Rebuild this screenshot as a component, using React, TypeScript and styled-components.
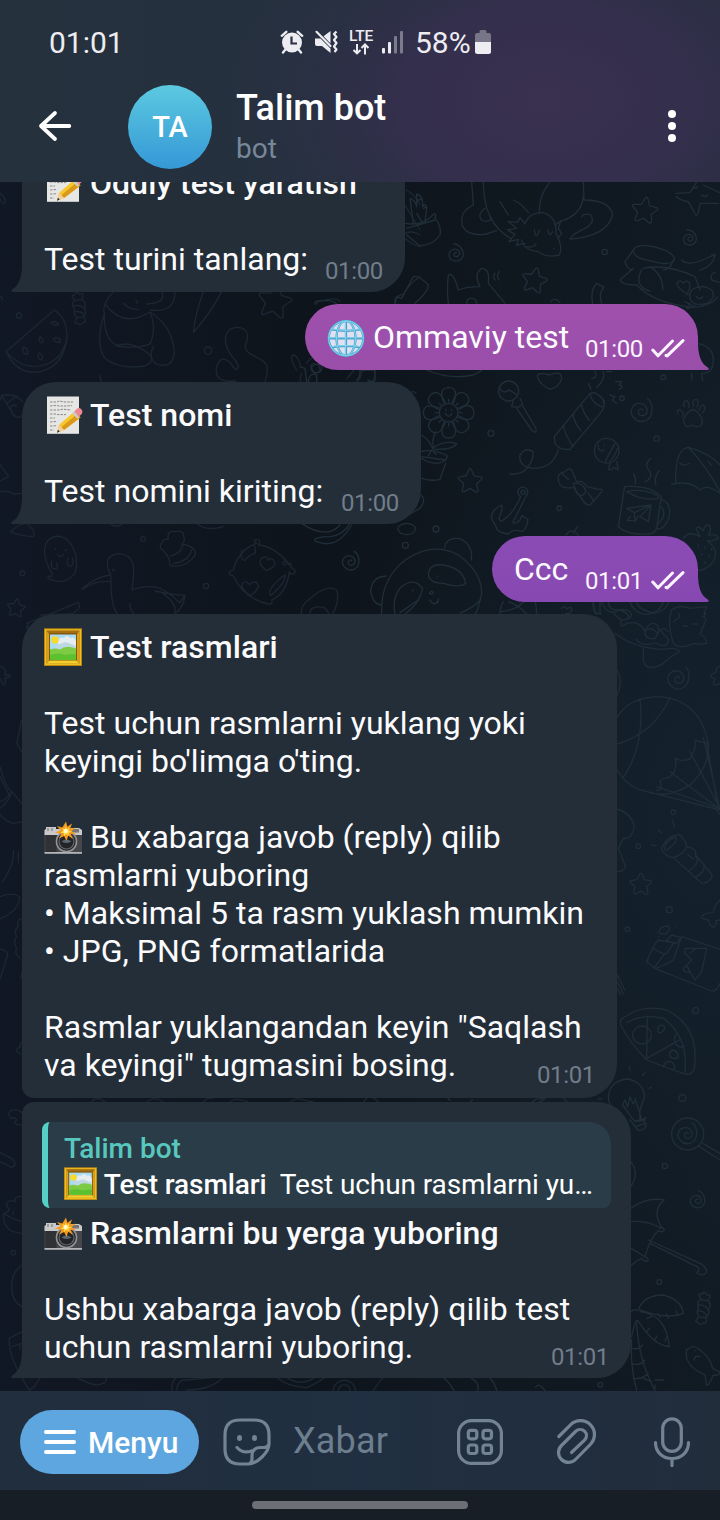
import React from "react";
import styled, { createGlobalStyle, css } from "styled-components";

const GlobalStyle = createGlobalStyle`
  *, *::before, *::after { box-sizing: border-box; }
  body {
    margin: 0;
    background: #0e151d;
    font-family: Roboto, "Noto Sans", sans-serif;
    color: #fff;
  }
`;

const Screen = styled.div`
  width: 720px;
  height: 1520px;
  display: flex;
  flex-direction: column;
  overflow: hidden;
`;

/* ---------- header ---------- */

const Header = styled.header`
  height: 182px;
  flex: none;
  position: relative;
  z-index: 1;
  background: radial-gradient(ellipse 330px 220px at 545px 100px, #3a3050 0%, #332f4c 45%, rgba(43, 48, 68, 0.55) 75%, rgba(37, 49, 63, 0) 100%), linear-gradient(90deg, #25313d 0%, #25303f 60%, #282c40 100%);
`;

const StatusBar = styled.div`
  height: 84px;
  display: flex;
  align-items: center;
  padding: 1px 0 0 49px;
  color: #ededf1;
  font-size: 30px;
  line-height: 36px;
`;

const Clock = styled.span`
  width: 231px;
`;

const StatusIcons = styled.div`
  display: flex;
  align-items: center;
  svg { display: block; margin-bottom: 1px; }
`;

const MuteIcon = styled.svg`
  margin-left: 10px;
`;

const Network = styled.span`
  display: flex;
  flex-direction: column;
  align-items: center;
  width: 24px;
  margin: 0 9px 0 11px;
  font-size: 15.5px;
  font-weight: 500;
  line-height: 13px;
  letter-spacing: -0.3px;
`;

const BatteryLevel = styled.span`
  margin: 0 4px 0 11px;
`;

const TitleBar = styled.div`
  height: 86px;
  display: flex;
  align-items: center;
  padding: 0 44px 0 38px;
`;

const IconButton = styled.button<{ $ml?: number }>`
  display: block;
  padding: 0;
  border: 0;
  background: none;
  color: inherit;
  margin-left: ${(p) => p.$ml ?? 0}px;
  svg { display: block; }
`;

const Avatar = styled.div`
  width: 84px;
  height: 84px;
  margin-left: 56px;
  border-radius: 50%;
  display: flex;
  align-items: center;
  justify-content: center;
  background: linear-gradient(#5cc9e0, #3598d6);
  font-size: 29px;
  font-weight: 500;
`;

const Heading = styled.div`
  flex: 1;
  margin-left: 24px;
  display: flex;
  flex-direction: column;
  gap: 3px;
  padding-bottom: 3px;
`;

const ChatName = styled.h1`
  margin: 0;
  font-size: 36px;
  font-weight: 500;
  line-height: 42px;
`;

const ChatStatus = styled.span`
  font-size: 28px;
  line-height: 33px;
  color: #778899;
`;

/* ---------- conversation ---------- */

const Conversation = styled.main`
  flex: 1;
  min-height: 0;
  position: relative;
  display: flex;
  flex-direction: column;
  justify-content: flex-end;
  padding: 0 22px 13px;
  overflow: hidden;
  background: radial-gradient(ellipse 380px 560px at 720px 620px, #14212d 0%, rgba(20, 33, 45, 0) 100%), linear-gradient(90deg, #111825 0%, #0e141b 45%, #111b24 100%);
`;

const Wallpaper = styled.svg`
  position: absolute;
  inset: 0;
  width: 720px;
  height: 1209px;
  fill: none;
  stroke-linecap: round;
  stroke-linejoin: round;
`;

type Side = "in" | "out";

const Bubble = styled.article<{ $side: Side; $w: number; $gap?: number; $fill?: string; $join?: "top" | "bottom" }>`
  position: relative;
  flex: none;
  width: ${(p) => p.$w}px;
  margin-top: ${(p) => p.$gap ?? 12}px;
  padding: 14px 22px ${(p) => (p.$join === "top" ? 12 : 14)}px;
  background: ${(p) => p.$fill ?? "#232e39"};
  ${(p) =>
    p.$side === "in"
      ? css`
          align-self: flex-start;
          border-radius: ${p.$join === "top" ? 12 : 34}px 34px 34px ${p.$join === "bottom" ? 12 : 0}px;
        `
      : css`
          align-self: flex-end;
          border-radius: 33px 33px 0 33px;
        `}
`;

const TailShape = styled.svg<{ $side: Side }>`
  position: absolute;
  bottom: 0;
  ${(p) => (p.$side === "in" ? "left: -11px;" : "right: -11px; transform: scaleX(-1);")}
`;

const Text = styled.p`
  margin: 0;
  font-size: 32px;
  line-height: 38px;
  letter-spacing: 0.02px;
  white-space: pre;
  color: #fbfbfd;
`;

const LastLine = styled.div`
  height: 38px;
  display: flex;
  justify-content: space-between;
`;

const Strong = styled.strong`
  font-weight: 500;
`;

const Emoji = styled.svg`
  vertical-align: top;
  overflow: visible;
`;

const Meta = styled.div<{ $side: Side; $lift?: number }>`
  display: flex;
  align-items: center;
  gap: 8px;
  height: 28px;
  margin: ${(p) => 17 - (p.$lift ?? 0)}px ${(p) => (p.$side === "out" ? "-9px" : "0")} 0 0;
  font-size: 24px;
  line-height: 28px;
  letter-spacing: -0.35px;
  color: ${(p) => (p.$side === "out" ? "#fbf4ff" : "#717d89")};
`;

const Reply = styled.div`
  width: 569px;
  height: 86px;
  margin: 6px 0 6px -2px;
  padding: 9px 16px 0;
  border-left: 6px solid #54d0c6;
  border-radius: 8px 22px 8px 8px;
  background: #2a3c47;
  font-size: 28px;
  line-height: 36px;
`;

const ReplyName = styled.div`
  color: #58c8bf;
  font-weight: 500;
`;

const ReplyText = styled.div`
  letter-spacing: -0.1px;
  white-space: pre;
`;

/* ---------- composer ---------- */

const Composer = styled.footer`
  flex: none;
  height: 99px;
  display: flex;
  align-items: center;
  padding: 3px 29px 0 20px;
  color: #738393;
  background: linear-gradient(90deg, #212e3d 0%, #202f41 50%, #222d3c 100%);
`;

const MenuButton = styled.button`
  width: 179px;
  height: 64px;
  border: 0;
  border-radius: 32px;
  padding: 2px 0 0 24px;
  display: flex;
  align-items: center;
  gap: 12px;
  background: #5ea6df;
  color: #fff;
  font: 500 30px/36px Roboto, sans-serif;
  svg { margin-bottom: 2px; }
`;

const Placeholder = styled.span`
  flex: 1;
  margin-left: 22px;
  font-size: 36px;
  line-height: 42px;
  letter-spacing: 0.2px;
  padding-bottom: 2px;
  color: #6d7e8e;
`;

const NavBar = styled.div`
  flex: none;
  height: 30px;
  display: flex;
  align-items: center;
  justify-content: center;
  background: #171e26;
`;

const HomeIndicator = styled.div`
  width: 216px;
  height: 8px;
  border-radius: 4px;
  background: #6c6f76;
`;

/* ---------- drawings ---------- */

const Memo = () => (
  <Emoji width="38" height="38" viewBox="0 0 38 38">
    <rect x="3" y="0.5" width="32" height="37.3" fill="#e6e6e4" />
    <path d="M6 6h7l2-1 6 1h8M6 10l6-.6 3 .6h7l6-.4M6 14h8l5-.8 8 .8M6 18h5l3 .6h8M6 22h5M6 26l7-.6M6 30h4l3-.5M6 34h4" stroke="#8a8a8a" strokeWidth="1" strokeDasharray="2.5 1" fill="none" />
    <path d="M13 36.500l2-7.5L31 15l5.500 6.500L20 34z" fill="#f8c62c" />
    <path d="M17 31.500L33.800 17.500l2.700 4L20 34z" fill="#dc9818" />
    <path d="M30 15.800l2.500-2.500q2.500-2.500 5 .3 2 2.600-.3 5l-2.200 2z" fill="#ef8793" />
    <path d="M28.400 17.200l2-1.800 4.800 5.800-2 1.600z" fill="#c8ccd0" />
    <path d="M13 36.700l2.200-7.700 4.900 5z" fill="#f0cf9a" />
    <path d="M13 36.700l.9-3 2 1.900z" fill="#333" />
  </Emoji>
);

const Globe = () => (
  <Emoji width="38" height="38" viewBox="0 0 38 38">
    <circle cx="19" cy="20.300" r="18" fill="#dfe1f3" />
    <g fill="none" stroke="#4a9fc8" strokeWidth="2.200">
      <circle cx="19" cy="20.300" r="17.300" />
      <ellipse cx="19" cy="20.300" rx="9.500" ry="17.300" />
      <path d="M19 3v34.500M2 20.300h34M5 11.500q14 2.800 28 0M5 29.300q14-2.800 28 0" />
    </g>
    <g fill="none" stroke="#7fd3ee" strokeWidth="1.100">
      <path d="M18.500 3v34.500M2 19.800h34M5 11q14 2.800 28 0M5 28.800q14-2.800 28 0" />
      <circle cx="19" cy="20.300" r="17.300" />
      <ellipse cx="19" cy="20.300" rx="9.500" ry="17.300" />
    </g>
  </Emoji>
);

const Frame = ({ size = 38 }: { size?: number }) => (
  <Emoji width={size} height={size} viewBox="0 0 38 38">
    <rect x="0" y="0.300" width="38" height="37.700" fill="#b8860f" />
    <rect x="1" y="1.300" width="36" height="35.700" fill="#eebd22" />
    <rect x="2.500" y="2.500" width="33" height="33" fill="#a36d14" />
    <path d="M2.500 35.500l3.500-3.500h26l3.500 3.500z" fill="#f4d02e" />
    <path d="M2.500 35.500V3L5 6v27zM35.500 35.500V3L33 6v27z" fill="#d9a01c" />
    <rect x="5" y="5" width="28" height="27.500" fill="#85590c" />
    <rect x="6" y="6.500" width="26" height="25.500" fill="#a6dcf4" />
    <path d="M14 13q2-5 6-3 3-4 6 0 4-2 6 3v9l-9 2-9-5z" fill="#e5edf2" />
    <path d="M12 17l10-3 10 4v5H10z" fill="#bdd8e2" />
    <circle cx="11" cy="12" r="3.700" fill="#f9d92c" />
    <path d="M6 21.500q5-2 10 0 6-5 16-1V32H6z" fill="#7ccb43" />
    <path d="M6 27q9-3 15 0 6-1 11-1v6H6z" fill="#5cc02f" />
  </Emoji>
);

const Camera = () => (
  <Emoji width="38" height="38" viewBox="0 0 38 38">
    <rect x=".5" y="14" width="37.500" height="21" fill="#46474a" />
    <rect x="1.500" y="17" width="11" height="17" fill="#303134" />
    <path d="M.5 17V12l1.500-1V9h10v2h13l2-1h8l3 2v5z" fill="#c9c9c9" />
    <rect x="28" y="11" width="7" height="3.500" fill="#777" />
    <path d="M4 10v3M8 10v3" stroke="#8d8d8d" strokeWidth="1.500" />
    <rect x=".5" y="34" width="37.500" height="1.800" fill="#b4b4b6" />
    <circle cx="22.500" cy="23.500" r="10.800" fill="#929498" />
    <circle cx="22.500" cy="23.500" r="9.300" fill="#232428" />
    <circle cx="22.500" cy="23.500" r="7.500" fill="none" stroke="#66686e" strokeWidth="1.200" />
    <path d="M17.500 23.500q5-4 10 0-5 3-10 0" fill="#59636f" />
    <path d="M22 3.500l1.400 5.300L28 5.500l-1.800 5 5.500-.8-4.300 3.500 4.800 2.300-5.500.7 2.300 4.800-4.800-3.200L22.500 23l-2.400-5-5 2.600 2.300-4.800-6.400-1.200 5.500-2.300-3.500-4.300 5.300 1.500z" fill="#f59a1d" />
    <path d="M21.800 7.500l1 3.500 2.700-1.500-1 2.800 3 1.200-3 1.500.5 2.500-2.800-1.500-2.300 2.200v-3l-3.300-.7 2.800-1.700-1.400-2.500 3 .6z" fill="#ffdc4d" />
    <circle cx="21.700" cy="13" r="2" fill="#fffbd8" />
  </Emoji>
);

const Tail = ({ side, color }: { side: Side; color: string }) => (
  <TailShape $side={side} width="12" height="28" viewBox="0 0 12 28">
    <path d="M12 0H11C11 13 8 22 1.200 25.400Q0 26.200.3 26.800 .5 28 2 28h10z" fill={color} />
  </TailShape>
);

const Checks = () => (
  <svg width="34" height="20" viewBox="0 0 34 20" fill="none" stroke="currentColor" strokeWidth="3" strokeLinecap="round" strokeLinejoin="round">
    <path d="M1.800 11l5.200 5.800L21.500 2M15 16.300l1.200.6L32 1.600" />
  </svg>
);

const Dot = ({ x, y, r = 7 }: { x: number; y: number; r?: number }) => <circle cx={x} cy={y} r={r} />;

const Star = ({ x, y, s = 1, a = 0 }: { x: number; y: number; s?: number; a?: number }) => (
  <path
    transform={`translate(${x} ${y}) rotate(${a}) scale(${s})`}
    strokeWidth={4 / s}
    d="M-3-32Q0-37 4-32L12-13 31-11Q37-9 33-4L19 9 23 28Q22 35 16 32L0 22-17 32Q-23 33-22 27L-18 8-33-5Q-36-10-30-11L-11-14Z"
  />
);

const Spiral = ({ x, y, s = 1, a = 0 }: { x: number; y: number; s?: number; a?: number }) => (
  <path
    transform={`translate(${x} ${y}) rotate(${a}) scale(${s})`}
    strokeWidth={4 / s}
    d="M24-32C40-12 30 28 2 32C-26 34-42 2-26-16C-10-32 18-20 15 2C12 20-14 18-12 2C-10-8 2-8 3 0"
  />
);

const Candy = ({ x, y, a = 0 }: { x: number; y: number; a?: number }) => (
  <g transform={`translate(${x} ${y}) rotate(${a})`}>
    <path d="M-10-26Q-25-18-15 0Q-20 18-9 26L10 26Q22 14 16 0Q24-16 10-26ZM-10-26Q-26-44-10-42Q-4-56 4-43Q22-46 10-26M-9 26Q-25 44-9 43Q-2 54 5 43Q22 44 10 26M-16-10Q8-12 15 2M-15 8Q4 6 12 19" />
  </g>
);

/* Each group is drawn on a grid three times finer than the screen. */
const area = (x: number, y: number) => `translate(${x} ${y}) scale(0.33333)`;

const Doodles = () => (
  <Wallpaper viewBox="0 182 720 1209">
    <g strokeWidth="4" stroke="#1c2733">
      <g transform={area(0, 170)}>
        <path d="M18 545L163 420Q202 445 201 502Q192 585 125 604Q55 620 18 545ZM20 548Q78 610 146 580Q192 560 201 500" />
        <path d="M152 459q14-9 24 3q-9 9-24-3zM120 500q14 9 7 18q-14-1-7-18zM160 506q18-8 22 10q-18 4-22-10zM70 531q18 6 12 22q-17-1-12-22zM118 548q14 11 8 22q-19-3-8-22z" />
        <Candy x={238} y={416} a={-6} />
        <Dot x={57} y={437} r={8} />
        <Dot x={624} y={542} r={11} />
        <path d="M340 365Q305 405 313 430Q284 520 315 565Q355 600 435 588Q470 570 444 550Q390 510 353 527Q310 510 313 430M318 405Q370 475 450 426Q520 470 523 550Q515 600 465 580Q445 560 460 530M450 426Q470 470 452 520Q420 538 350 528M525 365Q525 430 452 420M485 365Q500 400 440 402M370 400Q390 420 415 418M408 390l4 10" />
        <path d="M610 365Q586 430 580 487Q628 435 665 365" />
        <Star x={824} y={392} s={1.45} a={10} />
        <path d="M708 633Q640 640 650 590Q660 560 680 570C700 578 695 598 710 598C725 590 700 565 690 550C660 500 685 472 712 472C750 474 745 505 736 525C730 560 800 560 802 595Q802 615 795 636" />
        <path d="M890 600Q870 570 876 556Q890 550 902 586M905 610Q895 640 905 636M940 580q18 2 20 20q-13 20-26 0q-6-14 6-20M920 580Q940 550 960 570M1070 636q14-10 14-30l40-20v40q-8 14-22 6M1040 626q20-20 30-40" />
        <path d="M945 403Q940 390 970 392Q1010 380 1020 395M1185 400Q1180 380 1210 372Q1230 340 1260 320M1220 60Q1250 80 1260 105M1215 105L1260 180M1215 190Q1240 180 1260 195M1215 205Q1235 225 1260 230" />
        <path d="M0 70Q20 85 15 98Q5 105 0 85M0 380Q12 380 5 390" />
        <path d="M0 692Q3 685 5 676Q45 668 68 695M5 676L33 722Q50 755 67 735M33 722Q30 700 50 708M20 700l30-22" />
        <path d="M0 884L26 920L0 933M0 965Q24 960 40 972L66 970" />
        <path d="M300 615Q300 630 306 636" />
        <path d="M32 1085Q55 1062 80 1060Q110 1085 100 1100Q60 1098 32 1085M330 1060Q345 1075 365 1064M590 1060Q615 1085 670 1070" />
      </g>

      <g transform={area(0, 520)}>
        <path d="M150 150Q120 90 145 60Q175 35 208 65Q240 110 225 160Q190 200 145 175Q140 165 155 170Q160 160 150 150M155 123Q150 150 170 145Q175 140 170 128M205 115Q195 135 212 140Q225 130 217 115M172 103q10 13 18 0M165 85l3 4M196 88l2 4" />
        <path d="M245 207Q290 168 332 165Q305 110 350 102Q410 98 400 175L396 210Q450 190 490 210Q510 220 538 248Q550 238 552 226Q518 224 465 213M332 165L333 185Q285 180 250 207M333 185Q333 260 352 280M390 250Q388 265 402 282M480 215Q530 245 525 280Q550 265 555 226M338 150q3-8 4 3" />
        <path d="M490 92Q472 80 488 65Q490 55 505 58Q500 30 525 35Q550 30 550 45Q558 65 545 72Q590 80 586 105Q560 145 510 137Q510 110 490 92M512 108Q545 100 548 74M520 130Q565 125 575 90" />
        <path d="M770 70Q755 60 770 58Q785 60 775 75Q830 80 877 145Q890 150 883 160Q870 165 868 155Q860 220 815 240Q820 255 805 252Q730 235 700 167Q680 165 692 153L700 150Q715 90 770 70M725 90Q720 120 735 122Q745 105 765 100Q770 80 760 75M800 152Q770 130 785 115Q800 105 805 120Q820 110 825 130Q825 142 800 152M750 227Q720 205 727 190Q740 180 748 194Q770 175 775 200Q770 215 750 227M812 227Q800 205 855 165Q860 185 812 227M850 135q18-8 25-3M848 130l10-10" />
        <Star x={48} y={263} s={0.78} a={8} />
        <Dot x={67} y={160} />
        <Dot x={429} y={57} />
        <Dot x={618} y={198} r={8} />
        <path d="M905 282Q900 260 925 240Q980 190 1010 210Q1020 240 998 282M930 282Q930 255 970 262Q985 270 985 282M80 310L235 247Q248 265 215 282L120 285M85 310l-5 15 20-8" />
        <path d="M0 440Q20 440 15 465L32 465Q28 475 15 473Q20 495 10 495L0 475" />
        <path d="M65 600Q55 650 50 670L65 695M0 740Q15 800 35 815L65 850M0 770L28 825M35 815Q30 840 0 865M0 885Q20 905 40 910L66 905M0 845Q12 845 35 815M40 992Q45 1030 8 1085M55 995V1028" />
      </g>
      <g transform={area(0, 600)}>
        <path d="M0 890Q40 875 58 890Q60 930 0 957M66 955Q48 960 55 980Q40 990 50 1010Q38 1025 50 1045Q42 1060 60 1075M0 1048Q30 1050 20 1075L0 1138M66 1325Q55 1335 62 1340Q35 1355 66 1362M66 1115l-3 20" />
      </g>
      <g transform={area(0, 1080)}>
        <path d="M66 100Q55 85 32 92Q20 105 35 115Q45 110 50 120Q35 135 66 135M0 218L35 235Q55 255 35 262L0 245M66 350Q45 345 45 365Q18 355 20 380Q38 390 12 400Q5 430 30 450Q50 460 66 460M12 400Q30 415 66 425M40 395v8" />
        <Dot x={40} y={518} />
        <path d="M66 555Q35 575 35 620Q35 665 66 680M66 755L28 775Q22 830 88 930Q105 925 120 892M35 800L66 790M60 790v20" />
        <path d="M230 892Q260 910 290 915Q325 910 318 892M515 932Q515 900 530 892M530 930Q535 895 560 900M560 900L640 892M560 930Q620 930 655 905L670 892M830 892Q860 920 920 923Q960 905 975 892M860 892Q900 920 940 895" />
        <path d="M1000 932a32 30 0 0 1 66 0M1015 932a18 18 0 0 1 36 0M1120 932Q1135 908 1150 892M275 66Q290 45 315 66M440 66Q465 46 490 66M610 66Q620 52 640 55M690 66Q705 50 745 66M870 66l20-10 50 10M1090 66q18-30 45 0" />
      </g>
    </g>

    <g strokeWidth="4" stroke="#202e39">
      <g transform={area(300, 180)}>
        <path d="M515 6L520 75Q475 95 488 140Q505 170 560 162Q580 155 590 152M555 85Q530 105 545 120Q565 130 575 115M550 6Q550 130 632 175M600 65L625 105M640 60Q665 70 685 98M850 6L852 60Q930 60 938 105Q920 170 810 177Q820 160 855 145Q890 125 870 103Q848 100 845 110M718 98Q715 50 750 6M850 50Q845 105 780 125" />
        <path d="M675 130Q690 95 730 98Q770 110 768 160Q790 200 778 225Q740 235 715 215Q670 210 665 180M675 132L660 113L652 127L625 125L650 145L622 150L645 163L627 185L655 178L650 195L675 190M765 135L782 123L775 145L785 160L773 175M703 150Q708 185 718 150M743 150Q750 175 757 155M675 200Q700 205 708 192M762 205v2" />
        <path d="M340 130L330 55Q345 60 350 80L350 42Q370 45 368 80Q375 65 380 85L375 125M350 100L365 125M370 85l10-5M355 60l12-3M315 130Q370 140 400 103Q410 95 405 120L320 145M410 120Q425 145 420 165Q400 195 360 198L320 165" />
        <Star x={1034} y={90} s={1.12} a={8} />
        <path d="M1128 40L1170 38L1190 6M1128 50Q1150 65 1165 65L1187 105Q1195 110 1200 70L1255 70M1260 38L1210 15M1180 20q8 8 12 0M1205 45q10 8 18 0" />
        <Spiral x={1169} y={174} s={0.65} a={-55} />
        <Spiral x={468} y={220} s={0.72} a={-50} />
        <Dot x={914} y={216} r={8} />
        <Star x={703} y={300} s={1.08} a={12} />
        <path d="M1000 210Q1010 190 1060 200Q1125 215 1123 240Q1110 260 1050 242Q1000 235 1000 210ZM1120 240Q1110 270 1090 270M1000 210L975 245Q980 265 995 270M1000 265L960 300Q965 315 1010 315Q1060 370 1180 382Q1240 375 1252 350M1030 265Q1100 250 1185 290L1200 330M1025 268Q1000 320 1050 333M1050 260Q1090 285 1088 328M1145 240Q1170 265 1245 222Q1240 260 1200 270" />
        <path d="M1170 345Q1135 330 1130 310Q1140 295 1150 310Q1165 295 1170 315Q1170 330 1160 345M1175 330Q1205 310 1235 330Q1250 355 1220 370Q1185 380 1172 360Q1165 345 1175 330M1190 350q8 12 18 0M1155 365l20 10M1165 385l20-10M1245 278Q1230 280 1235 300L1260 308M1160 385l10 -15" />
        <path d="M285 370L290 350L305 355L340 290Q355 285 385 315Q385 335 345 370M445 370Q440 330 445 285Q460 275 475 330Q500 320 540 320Q520 280 545 265Q570 265 565 310L615 370M500 370Q500 355 515 355Q530 355 530 370M585 280q-8 10 0 20M597 275q-8 15 0 25M50 372Q45 362 75 362Q100 360 110 372M752 365Q765 350 780 368M878 370Q870 330 890 310L912 322Q895 340 905 370" />
        <path d="M1193 490Q1240 500 1240 540Q1240 580 1205 580L1208 602M1175 580v20M712 590Q710 575 750 585Q785 570 785 595Q780 620 750 628Q720 615 712 590M910 575q8 20-20 48M885 575q10 20-10 20M865 610l8 18M935 575l-15 0" />
        <path d="M380 570Q450 600 520 585L545 572M0 560l15 5 5 40M25 605q5-30 25-20v20M170 600q12-8 10-30h45v30q-10 10-20 0M35 560q18-15 30 0q0 18-15 18T35 560" />
        <g transform="translate(446 698)">
          <circle r="28" />
          {[0, 45, 90, 135, 180, 225, 270, 315].map((d) => (
            <path key={d} transform={`rotate(${d})`} d="M-14-28Q-33-74 0-76Q32-74 14-28M0-40V-32" />
          ))}
          <path d="M-10 2q10 18 20 0M-8-10v3M8-10v3" />
        </g>
        <path d="M363 765Q385 775 398 805Q430 780 470 790Q460 810 400 808M400 800Q395 780 407 755M363 815Q390 805 440 825Q445 845 410 850Q385 850 365 835M437 850L420 898Q395 905 365 895M365 830l70 10M385 828l10-18 14 14" />
        <circle cx="626" cy="633" r="30" />
        <path d="M598 622Q610 645 625 630Q640 635 650 645M640 660L635 680L655 682L668 672L660 655M650 685L695 750Q710 765 708 745L668 678" />
        <Dot x={573} y={760} r={9} />
        <path d="M763 770L870 640Q890 632 910 660Q915 680 905 695L810 808Q780 812 765 790ZM870 640Q875 670 905 680Q915 685 912 660M843 672q6 25 25 50M818 702q6 30 25 50M790 735q6 35 30 65M775 808Q760 865 700 865Q655 860 660 825Q675 800 700 815Q700 850 670 875Q645 885 630 882" />
        <Star x={510} y={902} s={1.05} />
        <Dot x={778} y={985} />
        <Dot x={966} y={655} />
        <Dot x={1090} y={592} />
        <Dot x={1070} y={776} r={8} />
        <path d="M947 605l18 0-8 10q20 5 0 13M930 645l15 5-8 10 12 10" />
        <Spiral x={1026} y={692} s={1} a={-12} />
        <path d="M1150 720Q1165 685 1185 690Q1215 715 1205 735Q1190 745 1175 735Q1155 750 1150 720M1133 700q-3-12 8-10q15 12 5 20M1153 680q-8-18 8-18q10 10 5 20M1180 678q-5-20 10-20q10 12 0 22M1198 690q5-20 15-12q5 10-5 20" />
        <circle cx="920" cy="812" r="37" />
        <path d="M895 805Q905 820 912 808M895 800v-5M912 795v3M945 790L915 845M952 805Q945 830 930 842M930 848L926 868Q935 875 940 862L955 870L950 845" />
        <path d="M830 905L815 870Q805 862 795 875Q770 880 775 900Q780 930 820 922L845 955Q855 975 870 975L905 935Q910 925 895 928L860 920Q850 900 830 905ZM820 910Q850 905 858 935Q845 955 830 940ZM785 880l20 18M880 960l-15-20" />
        <path d="M662 950A15 15 0 1 1 678 948L645 1015Q638 1022 640 1030Q650 1030 660 1020L665 1007L684 1018Q680 1050 665 1055Q640 1045 625 1062Q590 1058 588 1040L575 1015Q573 990 605 975Q610 985 597 1015Q600 1030 612 1018Q640 1000 662 950" />
        <circle cx="669" cy="937" r="6" />
        <path d="M973 925L955 1040Q980 1065 1045 1062Q1065 1060 1070 1045L1084 950Q1050 915 973 920ZM980 935Q1020 925 1060 940Q1080 950 1075 955Q1030 965 980 935M1082 958Q1115 965 1108 1010Q1090 1055 1070 1045M1080 980Q1095 985 1090 1010Q1080 1030 1073 1030M980 985L1053 975L1045 1025L1020 1010L1053 975M980 985L1003 998L1005 1025L1015 1008M1003 998L1053 975M990 1010l-8 12h18M1005 912Q1010 895 1000 882M1035 905Q1065 890 1043 865Q1035 850 1052 835M1068 915Q1060 895 1078 872" />
        <path d="M1260 855Q1230 820 1165 802Q1125 805 1127 910L1115 913Q1170 900 1200 930Q1220 910 1260 940M1165 802Q1220 860 1260 935M1140 850q12 12 28 0M1225 845l10 12" />
        <path d="M1150 1075Q1165 1050 1200 1070L1188 1045Q1195 1035 1210 1052Q1215 1030 1230 1038Q1235 1055 1225 1065Q1250 1060 1255 1075Q1240 1085 1222 1082Q1260 1110 1240 1145Q1220 1170 1193 1172" />
        <path d="M1195 1095v5M1215 1100v5M1205 1120v5M1227 1125v5M1215 1145v5M1235 1105v5" />
        <ellipse cx="320" cy="1047" rx="26" ry="17" />
        <Dot x={408} y={1047} r={9} />
        <Dot x={316} y={1096} r={9} />
        <Spiral x={153} y={1144} s={0.8} a={-20} />
        <path d="M245 1302Q240 1195 320 1137Q400 1085 475 1125Q545 1175 545 1240Q535 1290 525 1302M433 1103Q440 1070 480 1076Q520 1095 514 1140M258 1188Q215 1190 212 1235Q220 1275 245 1275M285 1302Q275 1250 305 1220Q340 1190 368 1225Q360 1270 315 1302M385 1180Q390 1150 430 1155Q490 1165 497 1210Q480 1225 430 1210Q385 1210 385 1180M388 1240q8-12 12-2q-5 8-12 2M390 1262q15 20 26 -5M338 1230v3M412 1188v3" />
        <path d="M45 1085Q40 1070 90 1070Q130 1065 150 1030M50 1085Q110 1110 155 1035M5 1030Q80 1080 120 1035M363 945Q380 960 360 985L330 1002" />
        <path d="M600 1302Q600 1280 610 1265M710 1302Q710 1280 705 1265M600 1295Q650 1290 670 1266M625 1265Q655 1275 680 1302M785 1285q12-10 15 2q14-10 16 2q-5 13-18 12M880 1270Q885 1310 890 1300M905 1265Q920 1310 960 1290Q990 1300 985 1315M1010 1266Q1015 1290 1065 1300Q1100 1290 1105 1268M798 1065Q815 1040 835 1065M820 1060l12-20" />
        <path d="M330 640q10-10 18 0" />
      </g>
      <g transform={area(400, 600)}>
        <path d="M580 5Q575 40 603 42M600 6V38M625 5Q625 30 655 30Q690 25 695 45Q690 60 663 60L640 40M663 60Q660 90 680 70Q720 60 735 95M690 5Q700 40 740 43Q780 40 790 5M645 100Q700 145 790 148Q830 140 838 155Q810 170 790 190Q740 220 730 180L730 145" />
        <path d="M820 130Q800 70 815 30Q840 12 870 25L920 20Q905 50 918 60L900 102Q920 110 920 130Q890 135 880 130Q840 150 820 130M820 65l20-15M840 50l-5-10M850 78h12M878 72l15 0M908 50l10-10M735 90q20-30 35-15t-5 40q-30 5-30-20q15-20 38 5M710 118Q720 140 760 130M765 128Q805 150 805 118L780 90Q790 80 805 95" />
        <Spiral x={836} y={235} s={1} a={-6} />
        <path d="M960 198Q945 205 950 215L932 225Q935 235 945 235L940 252Q945 260 960 250M652 210Q670 245 652 285" />
        <path d="M652 350Q690 290 780 290Q900 300 925 430Q930 500 870 555Q800 600 730 572Q680 560 652 510M720 297Q735 440 668 535M810 293Q760 400 652 432M730 572L960 630L910 412M770 560L960 625L870 455M810 515L955 625L920 430M925 425Q905 430 885 420Q890 450 868 478Q840 485 825 475Q835 510 808 532Q785 535 780 545Q790 570 770 572M945 625l15 18" />
        <path d="M652 627Q695 640 703 680Q695 720 670 715L655 745L677 800Q670 815 652 815M775 690l10 8M817 660l7 22M753 735l15 2" />
        <Dot x={820} y={637} />
        <Dot x={715} y={739} />
        <path d="M785 748Q795 710 838 703Q860 725 860 740Q850 765 818 773Q795 770 785 748ZM795 750Q790 725 825 712Q840 720 800 750M862 742Q875 740 887 755L887 770M887 765L937 825Q930 850 905 850L822 775M890 770Q900 790 868 812M912 798Q915 815 887 832M862 762l18 15" />
        <Star x={722} y={852} s={0.95} />
        <Dot x={808} y={929} r={9} />
        <Dot x={682} y={988} />
        <path d="M960 900Q940 920 940 938Q900 940 906 955L925 960Q930 980 942 982Q950 975 948 962L960 960M778 1000Q775 978 805 978Q815 990 795 1003ZM768 997h1M825 982h1M775 1010h1" />
        <path d="M775 1020Q760 1035 740 1085L765 1105L935 1173Q950 1175 960 1150M775 1020L830 1030L845 1010L960 1048M765 1105Q785 1100 820 1080L845 1010M760 1045Q790 1065 800 1060L820 1030L800 1020L815 1005L840 1012M795 1060L765 1100M855 1045H920L905 1115L885 1140L870 1115Q850 1120 850 1105L875 1080L855 1060ZM870 1060l15-12M860 1100q12 8 5 18" />
        <path d="M652 1125l22 45M652 1145l18 38M652 1165l10 20M0 38L55 0M90 0Q100 20 115 5M180 40Q225 20 240 0" />
      </g>
      <g transform={area(400, 980)}>
        <path d="M662 120Q720 70 800 90Q900 140 883 265Q875 290 850 280Q790 260 740 240Q690 190 662 135ZM680 128Q730 100 790 115Q865 170 855 275M742 108L740 235L842 178M698 165a28 27 0 1 1 56 0a28 27 0 1 1-56 0M780 160Q770 155 775 140Q785 130 795 142Q795 150 780 160M810 230Q805 215 820 210Q835 215 835 232Q820 240 810 230M832 160Q815 175 830 195Q840 205 855 198M790 260Q800 235 820 250Q828 265 820 268" />
        <Dot x={887} y={92} r={9} />
        <Dot x={847} y={354} r={10} />
        <path d="M652 395Q625 380 625 350Q630 300 685 297Q735 310 733 355Q715 390 720 415L738 430Q740 450 715 452L690 420M668 375L675 360L683 380L690 350L700 372L707 360M668 375L702 422Q735 420 738 412M725 418L705 355M705 425L735 420M710 438L738 430M690 270l-2-10M727 287l7-8M747 325l7-4M595 357h10" />
        <circle cx="863" cy="462" r="48" />
        <Spiral x={863} y={462} s={0.9} a={-15} />
        <path d="M908 490L960 520M898 500L960 540" />
        <Dot x={795} y={558} r={8} />
        <Spiral x={893} y={660} s={0.72} a={-35} />
        <path d="M692 545Q720 580 692 620M693 685Q740 650 793 660Q755 690 783 740L793 748Q790 760 775 752Q750 775 735 830Q745 835 745 840Q735 850 725 835Q710 840 695 855M693 725Q740 720 783 745M693 805Q710 815 735 830M745 780L900 850Q925 865 918 880Q905 890 890 878M750 790L895 862Q900 870 890 878" />
        <Dot x={778} y={906} />
        <path d="M715 990Q730 945 790 945Q845 960 850 1000Q800 1020 720 990M720 995Q800 1005 808 1100Q760 1095 720 1030L710 1020Q700 1040 695 1070M710 1030Q715 1140 765 1232M695 1080Q690 1160 710 1230M698 1105Q715 1110 728 1095M695 1150Q720 1160 735 1140M700 1195Q725 1200 745 1180M755 1205l-25-10M765 1200L790 1200M765 1215L765 1225M740 1015l15-5M775 1000l5 12M800 1002l5 12M828 992l5 15M740 1055l8-10M765 1080l5-12M795 1085l5-15" />
        <Candy x={910} y={986} a={8} />
        <path d="M860 1110Q880 1090 900 1110Q930 1130 938 1165L958 1175Q960 1190 940 1185Q925 1220 920 1215L915 1185Q850 1155 860 1110M882 1140Q885 1125 900 1130M885 1112h2M693 995q10-10 18-3" />
        <Dot x={601} y={1214} />
        <path d="M407 1222Q415 1205 435 1232M133 1195Q150 1210 162 1232M215 1195Q240 1210 233 1232M270 1195Q285 1210 290 1232M397 366Q405 355 435 355M418 366l15-8M490 354l12 12M143 354l8 8M210 366l8-8" />
      </g>
    </g>
  </Wallpaper>
);

export default function App() {
  return (
    <>
      <GlobalStyle />
      <Screen>
        <Header>
          <StatusBar>
            <Clock>01:01</Clock>
            <StatusIcons>
              <svg width="24" height="24" viewBox="0 0 24 24">
                <circle cx="12" cy="12.500" r="10" fill="currentColor" />
                <path d="M1.800 5.800l4.500-4M22.200 5.800l-4.500-4M5 20l-2 2.500M19 20l2 2.500" stroke="currentColor" strokeWidth="2.400" strokeLinecap="round" />
                <path d="M11.500 6.500v7h5.500" stroke="#2a3142" strokeWidth="2.200" fill="none" />
              </svg>
              <MuteIcon width="24" height="24" viewBox="0 0 24 24">
                <path d="M1 8.500h5.500L16.500 18.500V23l-8.500-7H3Q1 16 1 14zM9.500 6.300L16.500 1v12.500z" fill="currentColor" />
                <path d="M2.500 1.800L16.500 16" stroke="currentColor" strokeWidth="2.200" strokeLinecap="round" />
                <path d="M22.500 1.500l-2.500 2.500 2.500 3-2.500 3 2.500 3-2.500 3.500 2.500 3-2 2.500" fill="none" stroke="currentColor" strokeWidth="2.200" strokeLinejoin="round" />
              </MuteIcon>
              <Network>
                LTE
                <svg width="18" height="12" viewBox="0 0 18 12" fill="none" stroke="currentColor" strokeWidth="2">
                  <path d="M5 1v9M1.500 7L5 10.300 8.500 7M13 11.500V2M9.500 5L13 1.500 16.500 5" />
                </svg>
              </Network>
              <svg width="22" height="24" viewBox="0 0 22 24" fill="currentColor">
                <rect x="0" y="18" width="3" height="5.500" rx="1" />
                <rect x="6" y="12" width="3" height="11.500" rx="1" />
                <rect x="12" y="6" width="3" height="17.500" rx="1" opacity=".4" />
                <rect x="18" y="1" width="3" height="22.500" rx="1" opacity=".4" />
              </svg>
              <BatteryLevel>58%</BatteryLevel>
              <svg width="16" height="24" viewBox="0 0 16 24">
                <path d="M0 12V5q0-2 2-2h2.500V1.500q0-1.500 1.500-1.500h4q1.500 0 1.500 1.500V3H14q2 0 2 2v7z" fill="#777588" />
                <path d="M0 12h16v9.500q0 2.500-2.500 2.500h-11Q0 24 0 21.500z" fill="#eeedf2" />
              </svg>
            </StatusIcons>
          </StatusBar>
          <TitleBar>
            <IconButton aria-label="Back">
              <svg width="34" height="34" viewBox="0 0 34 34" fill="none" stroke="currentColor" strokeWidth="3.800" strokeLinecap="round" strokeLinejoin="round">
                <path d="M17 3L3 16l14 13M4 16h27.300" />
              </svg>
            </IconButton>
            <Avatar>TA</Avatar>
            <Heading>
              <ChatName>Talim bot</ChatName>
              <ChatStatus>bot</ChatStatus>
            </Heading>
            <IconButton aria-label="More">
              <svg width="8" height="34" viewBox="0 0 8 34" fill="currentColor">
                <circle cx="4" cy="4" r="4" />
                <circle cx="4" cy="16" r="4" />
                <circle cx="4" cy="28" r="4" />
              </svg>
            </IconButton>
          </TitleBar>
        </Header>

        <Conversation>
          <Doodles />
          <Bubble $side="in" $w={383}>
            <Text>
              <Memo /> <Strong>Oddiy test yaratish</Strong>
              {"\n\n"}
            </Text>
            <LastLine>
              <Text>Test turini tanlang:</Text>
              <Meta $side="in">01:00</Meta>
            </LastLine>
            <Tail side="in" color="#232e39" />
          </Bubble>
          <Bubble $side="out" $w={393} $fill="linear-gradient(#9f50ad, #994eaa)">
            <LastLine>
              <Text>
                <Globe /> Ommaviy test
              </Text>
              <Meta $side="out">
                01:00 <Checks />
              </Meta>
            </LastLine>
            <Tail side="out" color="#994eaa" />
          </Bubble>
          <Bubble $side="in" $w={399}>
            <Text>
              <Memo /> <Strong>Test nomi</Strong>
              {"\n\n"}
            </Text>
            <LastLine>
              <Text>Test nomini kiriting:</Text>
              <Meta $side="in">01:00</Meta>
            </LastLine>
            <Tail side="in" color="#232e39" />
          </Bubble>
          <Bubble $side="out" $w={206} $fill="linear-gradient(#8b4bb4, #8749b1)">
            <LastLine>
              <Text>Ccc</Text>
              <Meta $side="out">
                01:01 <Checks />
              </Meta>
            </LastLine>
            <Tail side="out" color="#8749b1" />
          </Bubble>
          <Bubble $side="in" $w={595} $join="bottom">
            <Text>
              <Frame /> <Strong>Test rasmlari</Strong>
              {"\n\nTest uchun rasmlarni yuklang yoki\nkeyingi bo'limga o'ting.\n\n"}
              <Camera />
              {' Bu xabarga javob (reply) qilib\nrasmlarni yuboring\n• Maksimal 5 ta rasm yuklash mumkin\n• JPG, PNG formatlarida\n\nRasmlar yuklangandan keyin "Saqlash'}
            </Text>
            <LastLine>
              <Text>va keyingi" tugmasini bosing.</Text>
              <Meta $side="in" $lift={2}>01:01</Meta>
            </LastLine>
          </Bubble>
          <Bubble $side="in" $w={609} $gap={4} $join="top">
            <Reply>
              <ReplyName>Talim bot</ReplyName>
              <ReplyText>
                <Frame size={33} /> <Strong>Test rasmlari</Strong>
                {"  Test uchun rasmlarni yu…"}
              </ReplyText>
            </Reply>
            <Text>
              <Camera /> <Strong>Rasmlarni bu yerga yuboring</Strong>
              {"\n\nUshbu xabarga javob (reply) qilib test"}
            </Text>
            <LastLine>
              <Text>uchun rasmlarni yuboring.</Text>
              <Meta $side="in" $lift={2}>01:01</Meta>
            </LastLine>
            <Tail side="in" color="#232e39" />
          </Bubble>
        </Conversation>

        <Composer>
          <MenuButton>
            <svg width="32" height="24" viewBox="0 0 32 24" stroke="currentColor" strokeWidth="4" strokeLinecap="round">
              <path d="M2 2h28M2 12h28M2 22h28" />
            </svg>
            Menyu
          </MenuButton>
          <IconButton $ml={24} aria-label="Stickers">
            <svg width="48" height="48" viewBox="0 0 48 48" fill="none" stroke="currentColor" strokeWidth="3.200" strokeLinecap="round" strokeLinejoin="round">
              <path d="M46 26V17Q46 2 31 2H17Q2 2 2 17V31Q2 46 17 46H25Q32 46 39 39T46 26Q45 29.500 41 29.500H37Q29 30 29 38V41Q29 45 26 46" />
              <path d="M14 29.500Q20 36 28.500 33" />
              <ellipse cx="16.500" cy="20" rx="1.500" ry="2" fill="currentColor" strokeWidth="2" />
              <ellipse cx="31.500" cy="20" rx="1.500" ry="2" fill="currentColor" strokeWidth="2" />
            </svg>
          </IconButton>
          <Placeholder>Xabar</Placeholder>
          <IconButton aria-label="Commands">
            <svg width="46" height="46" viewBox="0 0 46 46" fill="none" stroke="currentColor" strokeWidth="3.200">
              <rect x="1.600" y="1.600" width="42.800" height="42.800" rx="13" />
              <rect x="11.300" y="11.300" width="8.500" height="8.500" rx="2.500" />
              <rect x="26" y="11.300" width="8.500" height="8.500" rx="2.500" />
              <rect x="11.300" y="26" width="8.500" height="8.500" rx="2.500" />
              <rect x="26" y="26" width="8.500" height="8.500" rx="2.500" />
            </svg>
          </IconButton>
          <IconButton $ml={52} aria-label="Attach">
            <svg width="42" height="46" viewBox="-1 0 42 46" fill="none" stroke="currentColor" strokeWidth="3.200" strokeLinecap="round" strokeLinejoin="round">
              <path d="M2.800 17.500L14.500 5.800C20 .5 29 .2 34.500 5.800C40 11.300 39.600 20 34.300 25.500L19.500 40.500C15.700 44.300 9.500 44.500 5.500 40.500C1.500 36.500 1.500 30.500 5.500 26.500L19.500 12.500C22.300 9.700 26.200 10 28.500 12.200C31.200 14.800 31 18.500 28.500 21.200L15.500 33.500" />
            </svg>
          </IconButton>
          <IconButton $ml={56} aria-label="Voice message">
            <svg width="38" height="50" viewBox="0 0 38 50" fill="none" stroke="currentColor" strokeWidth="3.200" strokeLinecap="round">
              <rect x="9.700" y="1.800" width="18.600" height="32.500" rx="9.300" />
              <path d="M2.500 25.500C2.500 35 9.500 41.500 19 41.500S35.500 35 35.500 25.500M19 41.500v7" />
            </svg>
          </IconButton>
        </Composer>
        <NavBar>
          <HomeIndicator />
        </NavBar>
      </Screen>
    </>
  );
}
